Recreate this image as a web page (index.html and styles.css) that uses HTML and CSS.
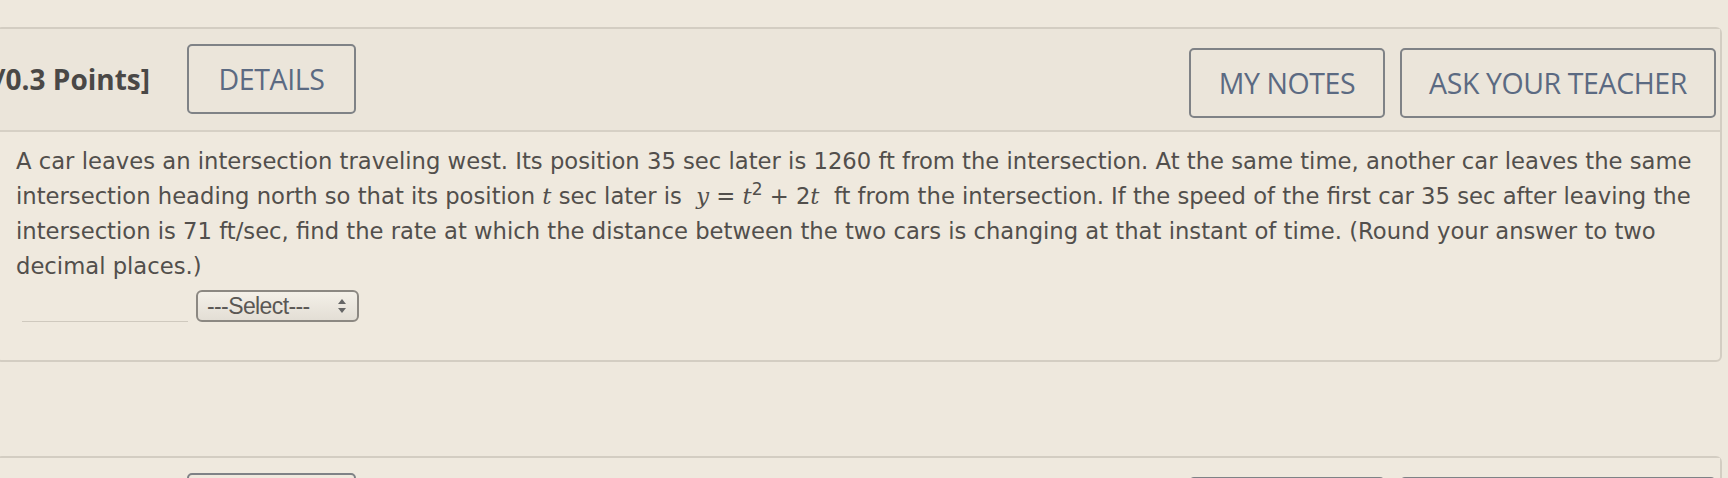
FILE: index.html
```html
<!DOCTYPE html>
<html>
<head>
<meta charset="utf-8">
<link rel="stylesheet" href="styles.css">
</head>
<body>
<div class="page">
  <section class="question">
    <header class="q-head">
      <span class="points">/0.3 Points]</span>
      <button class="btn btn-details">DETAILS</button>
      <div class="spacer"></div>
      <button class="btn btn-notes">MY NOTES</button>
      <button class="btn btn-ask">ASK YOUR TEACHER</button>
    </header>
    <div class="q-body">
      <p class="prompt">A car leaves an intersection traveling west. Its position 35 sec later is 1260 ft from the intersection. At the same time, another car leaves the same intersection heading north so that its position <i>t</i> sec later is&nbsp; <span class="math"><i>y</i> = <i>t</i><sup>2</sup> + 2<i>t</i></span>&nbsp; ft from the intersection. If the speed of the first car 35 sec after leaving the intersection is 71 ft/sec, find the rate at which the distance between the two cars is changing at that instant of time. (Round your answer to two decimal places.)</p>
      <div class="answer">
        <span class="blank"></span>
        <div class="select">
          <span class="select-label">---Select---</span>
          <svg class="arrows" width="10" height="16" viewBox="0 0 10 16"><path d="M5 1 L9 6 L1 6 Z" fill="#666"/><path d="M5 15 L9 10 L1 10 Z" fill="#666"/></svg>
        </div>
      </div>
    </div>
  </section>
  <section class="question next">
    <header class="q-head">
      <span class="points hidden">/0.3 Points]</span>
      <button class="btn btn-details">DETAILS</button>
      <div class="spacer"></div>
      <button class="btn btn-notes">MY NOTES</button>
      <button class="btn btn-ask">ASK YOUR TEACHER</button>
    </header>
  </section>
</div>
</body>
</html>
```
FILE: styles.css
```css
html, body {
  margin: 0;
  padding: 0;
  background: #eee8dd;
  overflow: hidden;
}
.page {
  padding-top: 27px;
  width: 1728px;
  height: 478px;
  box-sizing: border-box;
}
.question {
  margin-left: -4px;
  width: 1722px;
  border: 2px solid #d3cdc2;
  border-radius: 6px;
  background: #efe9de;
}
.q-head {
  display: flex;
  align-items: center;
  height: 103px;
  border-bottom: 2px solid #d6d0c5;
  background: #ebe5da;
  padding-right: 4px;
  padding-top: 6px;
  box-sizing: border-box;
}
.points {
  font-family: "Open Sans", sans-serif;
  font-weight: 700;
  font-size: 28px;
  color: #4a4846;
  margin-left: -4px;
  margin-top: -8px;
  width: 193px;
  flex: none;
}
.hidden { visibility: hidden; }
.spacer { flex: 1; }
.btn {
  font-family: "Open Sans", sans-serif;
  font-size: 28.5px;
  color: #5b6a82;
  background: transparent;
  border: 2px solid #7f8286;
  border-radius: 5px;
  height: 70px;
  padding: 0;
  flex: none;
  letter-spacing: -0.4px;
}
.btn-details { width: 169px; margin-top: -8px; }
.btn-notes { width: 196px; margin-right: 15px; }
.btn-ask { width: 316px; }
.q-body {
  padding: 12px 10px 38px 18px;
}
.prompt {
  margin: 0;
  font-family: "DejaVu Sans", Verdana, sans-serif;
  font-size: 22.7px;
  line-height: 35px;
  color: #524f4c;
}
.prompt i { font-family: "DejaVu Serif", serif; }
.math sup { font-size: 0.75em; line-height: 0; }
.answer {
  display: flex;
  align-items: flex-end;
  margin-top: 6px;
  margin-left: 6px;
}
.blank {
  width: 166px;
  border-bottom: 1px solid #cfc9be;
  margin-right: 8px;
}
.select {
  display: flex;
  align-items: center;
  justify-content: space-between;
  width: 163px;
  height: 32px;
  box-sizing: border-box;
  border: 2px solid #8c8882;
  border-radius: 6px;
  background: linear-gradient(#f4f0e8, #e3ded5);
  padding: 0 10px 0 9px;
}
.select-label {
  font-family: "Liberation Sans", Arial, sans-serif;
  font-size: 23px;
  color: #5a5754;
  letter-spacing: -0.6px;
}
.next {
  margin-top: 94px;
}
.next .q-head { background: #efe9de; }
```
